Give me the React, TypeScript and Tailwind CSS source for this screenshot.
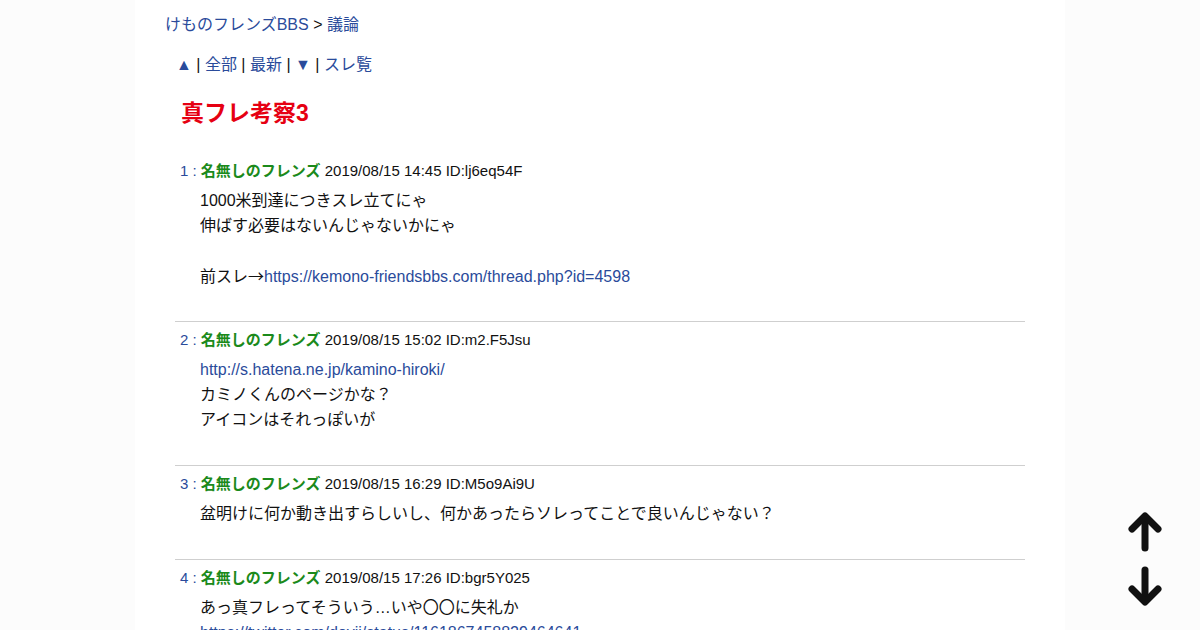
const font = 'font-["Liberation_Sans","Noto_Sans_CJK_JP",sans-serif]';

type Post = {
  no: number;
  date: string;
  id: string;
  body: (string | { href: string; pre?: string })[];
};

const posts: Post[] = [
  {
    no: 1,
    date: '2019/08/15 14:45',
    id: 'lj6eq54F',
    body: [
      '1000米到達につきスレ立てにゃ',
      '伸ばす必要はないんじゃないかにゃ',
      '',
      { pre: '前スレ→', href: 'https://kemono-friendsbbs.com/thread.php?id=4598' },
    ],
  },
  {
    no: 2,
    date: '2019/08/15 15:02',
    id: 'm2.F5Jsu',
    body: [{ href: 'http://s.hatena.ne.jp/kamino-hiroki/' }, 'カミノくんのページかな？', 'アイコンはそれっぽいが'],
  },
  {
    no: 3,
    date: '2019/08/15 16:29',
    id: 'M5o9Ai9U',
    body: ['盆明けに何か動き出すらしいし、何かあったらソレってことで良いんじゃない？'],
  },
  {
    no: 4,
    date: '2019/08/15 17:26',
    id: 'bgr5Y025',
    body: ['あっ真フレってそういう…いや〇〇に失礼か', { href: 'https://twitter.com/dovji/status/1161867458829464641' }],
  },
];

function PostItem({ post, last }: { post: Post; last: boolean }) {
  return (
    <div className={`pt-[8px] ${last ? '' : 'pb-[33px] border-b border-[#cfcfcf]'}`}>
      <div className="pl-[5px] text-[15px] leading-[20px] text-[#111]">
        <span className="text-[#2a4b9b]">{post.no} : </span>
        <span className="font-bold text-[#1b8a1b]">名無しのフレンズ</span> {post.date} ID:{post.id}
      </div>
      <div className="mt-[7px] pl-[25px] text-[16px] leading-[25px] text-[#111]">
        {post.body.map((line, i) =>
          typeof line === 'string' ? (
            <div key={i} className="h-[25px]">
              {line}
            </div>
          ) : (
            <div key={i} className="h-[25px]">
              {line.pre && <span className='font-["Noto_Sans_CJK_JP",sans-serif]'>{line.pre}</span>}
              <a href="#" className="text-[#2a4b9b]">
                {line.href}
              </a>
            </div>
          )
        )}
      </div>
    </div>
  );
}

export default function App() {
  return (
    <div className={`min-h-screen bg-[#fcfcfc] ${font}`}>
      <div className="mx-auto w-[930px] min-h-screen bg-white pl-[30px] pt-[13px]">
        <div className="text-[16px] leading-[24px] text-[#111]">
          <a href="#" className="text-[#2a4b9b]">けものフレンズBBS</a> &gt;{' '}
          <a href="#" className="text-[#2a4b9b]">議論</a>
        </div>

        <div className="mt-[16px] ml-[11px] text-[16px] leading-[24px] text-[#111]">
          <a href="#" className="text-[#2a4b9b]">▲</a> | <a href="#" className="text-[#2a4b9b]">全部</a> |{' '}
          <a href="#" className="text-[#2a4b9b]">最新</a> | <a href="#" className="text-[#2a4b9b]">▼</a> |{' '}
          <a href="#" className="text-[#2a4b9b]">スレ覧</a>
        </div>

        <h1 className="mt-[20px] mb-[24px] ml-[16px] text-[23px] leading-[32px] font-bold text-[#e60012]">真フレ考察3</h1>

        <div className="ml-[10px] w-[850px]">
          {posts.map((p, i) => (
            <PostItem key={p.no} post={p} last={i === posts.length - 1} />
          ))}
        </div>
      </div>

      <div className="fixed right-[38px] bottom-[24px] flex flex-col items-center gap-[14px]">
        <svg width="34" height="40" viewBox="0 0 34 40" fill="none" stroke="#111" strokeWidth="7" strokeLinecap="round" strokeLinejoin="round">
          <path d="M17 36V6" />
          <path d="M4 17L17 4L30 17" />
        </svg>
        <svg width="34" height="40" viewBox="0 0 34 40" fill="none" stroke="#111" strokeWidth="7" strokeLinecap="round" strokeLinejoin="round">
          <path d="M17 4V34" />
          <path d="M4 23L17 36L30 23" />
        </svg>
      </div>
    </div>
  );
}
